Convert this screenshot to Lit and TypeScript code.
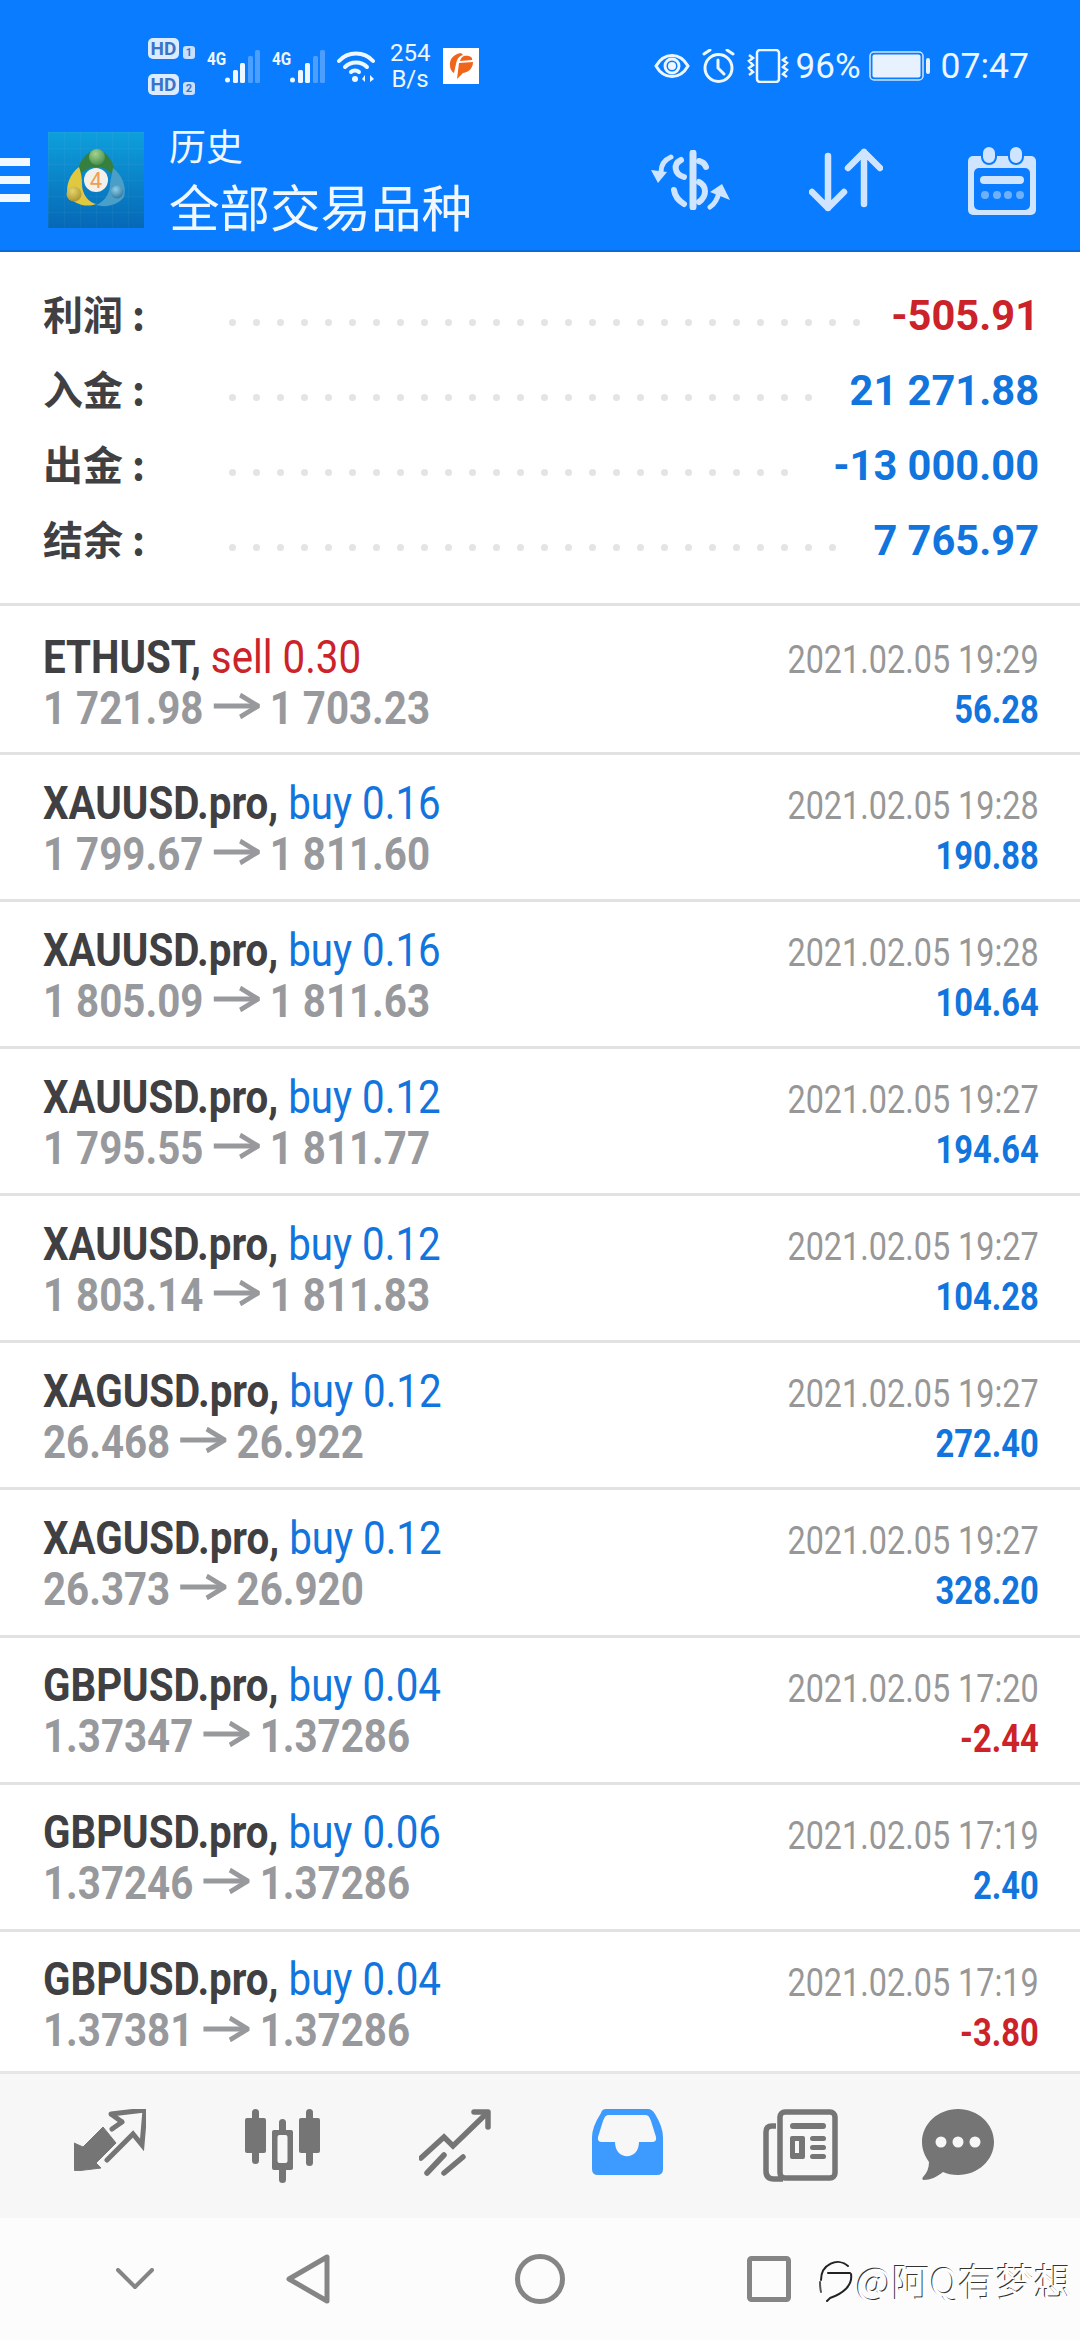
import { LitElement, html, css, svg } from "lit";
import { customElement } from "lit/decorators.js";

const LIGHT = "#cfe4ff";
const GREY = "#757575";

const summary = [
  { label: "利润", value: "-505.91", dots: 27, cls: "red" },
  { label: "入金", value: "21 271.88", dots: 25, cls: "blue" },
  { label: "出金", value: "-13 000.00", dots: 24, cls: "blue" },
  { label: "结余", value: "7 765.97", dots: 26, cls: "blue" },
];

const trades = [
  { sym: "ETHUST,", side: "sell 0.30", from: "1 721.98", to: "1 703.23", date: "2021.02.05 19:29", pnl: "56.28" },
  { sym: "XAUUSD.pro,", side: "buy 0.16", from: "1 799.67", to: "1 811.60", date: "2021.02.05 19:28", pnl: "190.88" },
  { sym: "XAUUSD.pro,", side: "buy 0.16", from: "1 805.09", to: "1 811.63", date: "2021.02.05 19:28", pnl: "104.64" },
  { sym: "XAUUSD.pro,", side: "buy 0.12", from: "1 795.55", to: "1 811.77", date: "2021.02.05 19:27", pnl: "194.64" },
  { sym: "XAUUSD.pro,", side: "buy 0.12", from: "1 803.14", to: "1 811.83", date: "2021.02.05 19:27", pnl: "104.28" },
  { sym: "XAGUSD.pro,", side: "buy 0.12", from: "26.468", to: "26.922", date: "2021.02.05 19:27", pnl: "272.40" },
  { sym: "XAGUSD.pro,", side: "buy 0.12", from: "26.373", to: "26.920", date: "2021.02.05 19:27", pnl: "328.20" },
  { sym: "GBPUSD.pro,", side: "buy 0.04", from: "1.37347", to: "1.37286", date: "2021.02.05 17:20", pnl: "-2.44" },
  { sym: "GBPUSD.pro,", side: "buy 0.06", from: "1.37246", to: "1.37286", date: "2021.02.05 17:19", pnl: "2.40" },
  { sym: "GBPUSD.pro,", side: "buy 0.04", from: "1.37381", to: "1.37286", date: "2021.02.05 17:19", pnl: "-3.80" },
];

const signal = svg`<svg width="35" height="33" viewBox="0 0 35 33">
  <circle cx="2.5" cy="30" r="2.5" fill="#eef6ff"/>
  <rect x="8" y="20" width="5" height="13" rx="1.5" fill="#eef6ff"/>
  <rect x="15" y="13" width="5" height="20" rx="1.5" fill="#eef6ff"/>
  <rect x="23" y="6" width="5" height="27" rx="1.5" fill="#4d9fff"/>
  <rect x="30" y="0" width="5" height="33" rx="1.5" fill="#4d9fff"/>
</svg>`;

const wifi = svg`<svg width="38" height="31" viewBox="0 0 38 31" fill="none" stroke="#eef6ff" stroke-width="4" stroke-linecap="round">
  <path d="M2 10C11 0 27 0 36 10"/>
  <path d="M8 16C14 10 24 10 30 16"/>
  <path d="M14 21C16 19 20 19 22 21"/>
  <circle cx="18" cy="28" r="3" fill="#eef6ff" stroke="none"/>
  <path d="M28 24l-3 4 3 3zM33 24l4 4-4 3z" fill="#eef6ff" stroke="none"/>
</svg>`;

const orange = svg`<svg width="36" height="36" viewBox="0 0 36 36">
  <rect width="36" height="36" fill="#fff"/>
  <path d="M18 5C11 6 6 11 7 18c0 3 2 6 4 7l2-9c1-5 3-8 7-9l-2-2z" fill="#f0651c"/>
  <path d="M21 8c6-1 9 2 8 4l-12 1c1-3 2-4 4-5zM16 15l14-1c0 6-4 10-10 11l-6 6z" fill="#f0651c"/>
</svg>`;

const eye = svg`<svg width="36" height="28" viewBox="0 0 36 28" fill="none" stroke="#eef6ff" stroke-width="3">
  <path d="M2 14C10 0 26 0 34 14C26 28 10 28 2 14Z"/>
  <circle cx="18" cy="14" r="7"/>
  <circle cx="18" cy="14" r="4" fill="#eef6ff" stroke="none"/>
</svg>`;

const alarm = svg`<svg width="33" height="34" viewBox="0 0 33 34" fill="none" stroke="#eef6ff" stroke-width="3" stroke-linecap="round">
  <circle cx="16.5" cy="19" r="13.5"/>
  <path d="M16 11v8l6 6M2 5l6-4M31 5l-6-4"/>
</svg>`;

const vibrate = svg`<svg width="42" height="34" viewBox="0 0 42 34" fill="none" stroke="#eef6ff" stroke-width="2.5">
  <rect x="10" y="1" width="22" height="32" rx="3"/>
  <path d="M2 6l4 3-4 3 4 4-4 3 4 4-4 3M40 8l-4 3 4 3-4 4 4 3-4 4 4 3"/>
</svg>`;

const battery = svg`<svg width="62" height="30" viewBox="0 0 62 30">
  <rect x="1" y="1" width="53" height="28" rx="4" fill="none" stroke="#cfe4ff" stroke-width="1.5"/>
  <rect x="3.5" y="3.5" width="48" height="23" rx="2" fill="#e8f2ff"/>
  <rect x="57" y="7" width="4" height="16" rx="2" fill="#e8f2ff"/>
</svg>`;

const logo = svg`<svg width="96" height="96" viewBox="0 0 96 96">
  <defs>
    <linearGradient id="lg" x1="0" y1="0" x2="0" y2="1"><stop offset="0" stop-color="#0e9fdc"/><stop offset="1" stop-color="#0668b6"/></linearGradient>
    <pattern id="grid" width="16" height="16" patternUnits="userSpaceOnUse"><path d="M16 0H0V16" fill="none" stroke="#fff" stroke-opacity=".07"/></pattern>
    <radialGradient id="hg" cx=".4" cy=".3" r=".8"><stop offset="0" stop-color="#a4d38e"/><stop offset="1" stop-color="#3d8a48"/></radialGradient>
    <radialGradient id="hy" cx=".4" cy=".3" r=".8"><stop offset="0" stop-color="#e6d46c"/><stop offset="1" stop-color="#a58d28"/></radialGradient>
    <radialGradient id="hb" cx=".4" cy=".3" r=".8"><stop offset="0" stop-color="#8fd0e6"/><stop offset="1" stop-color="#256f9c"/></radialGradient>
  </defs>
  <rect width="96" height="96" fill="url(#lg)"/>
  <rect width="96" height="96" fill="url(#grid)"/>
  <path d="M29 46C29 30 38 20 49 17C60 20 68 32 67 46C62 38 55 35 48 35C41 35 34 39 29 46Z" fill="#35803f"/>
  <path d="M31 35C22 42 17 54 20 64C26 72 38 76 48 72C40 70 34 62 34 52C34 46 33 40 31 35Z" fill="#e0c83f"/>
  <path d="M65 36C74 43 79 55 76 65C70 73 58 76 48 73C56 70 62 62 62 52C63 46 64 41 65 36Z" fill="#4a9fc8"/>
  <circle cx="49" cy="25" r="8" fill="url(#hg)"/>
  <circle cx="26" cy="62" r="7.5" fill="url(#hy)"/>
  <circle cx="69" cy="60" r="6.5" fill="url(#hb)"/>
  <circle cx="48" cy="48" r="12" fill="#f3f0ea"/>
  <text x="48" y="56" text-anchor="middle" font-family="Roboto, sans-serif" font-size="22" fill="#ef9f4f">4</text>
</svg>`;

const money = svg`<svg width="79" height="60" viewBox="0 0 79 60" fill="none" stroke="${LIGHT}" stroke-width="7" stroke-linecap="round">
  <path d="M42 3V57"/>
  <path d="M30 10C22 14 23 24 33 27" stroke-width="6"/>
  <path d="M48 11C52 12 54 14 55 17" stroke-width="6"/>
  <path d="M23 40C24 47 28 51 33 54" stroke-width="6"/>
  <path d="M48 32C56 36 56 46 48 52" stroke-width="6"/>
  <path d="M20 7C13 10 10 15 10 22" stroke-width="5"/>
  <path d="M0 20L16 22L7 33Z" fill="${LIGHT}" stroke="none"/>
  <path d="M59 57C65 53 67 47 68 42" stroke-width="5"/>
  <path d="M71 34L79 50L59 42Z" fill="${LIGHT}" stroke="none"/>
</svg>`;

const arrows = svg`<svg width="74" height="64" viewBox="0 0 74 64" fill="none" stroke="${LIGHT}" stroke-width="6.5" stroke-linecap="round" stroke-linejoin="round">
  <path d="M19 8V60M3 44L19 60L35 44"/>
  <path d="M55 56V4M39 20L55 4L71 20"/>
</svg>`;

const calendar = svg`<svg width="68" height="70" viewBox="0 0 68 70">
  <rect x="0" y="11" width="68" height="59" rx="5" fill="${LIGHT}"/>
  <rect x="6" y="23" width="56" height="42" rx="5" fill="#0a7cff"/>
  <rect x="14" y="1" width="14" height="18" rx="7" fill="${LIGHT}" stroke="#0a7cff" stroke-width="2"/>
  <rect x="41" y="1" width="14" height="18" rx="7" fill="${LIGHT}" stroke="#0a7cff" stroke-width="2"/>
  <rect x="12" y="31" width="44" height="8" rx="4" fill="${LIGHT}"/>
  <g fill="#6fb0fb"><circle cx="17" cy="50" r="4"/><circle cx="29" cy="50" r="4"/><circle cx="40" cy="50" r="4"/><circle cx="52" cy="50" r="4"/></g>
</svg>`;

const priceArrow = svg`<svg class="arrow" width="54" height="26" viewBox="0 0 54 26" fill="none" stroke="#98999c" stroke-width="5">
  <path d="M0 13H52"/>
  <path d="M31 2L52 13L31 24"/>
</svg>`;

const navIcons = [
  svg`<svg width="72" height="62" viewBox="0 0 72 62">
    <path d="M0 34V60Q0 62 2 62L27 59L22 54L42 34L29 18L9 38Z" fill="${GREY}" stroke="${GREY}" stroke-width="1" stroke-linejoin="round"/>
    <path d="M37 5L71 1L68 36L59 25L33 51M48 13L38 20" fill="none" stroke="${GREY}" stroke-width="5" stroke-linecap="round"/>
    <path d="M37 5L48 13" fill="none" stroke="${GREY}" stroke-width="5"/>
  </svg>`,
  svg`<svg width="75" height="74" viewBox="0 0 75 74" fill="${GREY}">
    <rect x="0" y="9" width="21" height="35" rx="2"/><rect x="7" y="0" width="7" height="55" rx="3.5"/>
    <rect x="54" y="9" width="21" height="35" rx="2"/><rect x="61" y="0" width="7" height="57" rx="3.5"/>
    <rect x="34" y="10" width="7" height="64" rx="3.5"/><rect x="27" y="21" width="21" height="40" rx="2"/>
    <rect x="32.5" y="26" width="10" height="28" rx="2" fill="#f7f7f7"/>
  </svg>`,
  svg`<svg width="72" height="67" viewBox="0 0 72 67" fill="none" stroke="${GREY}" stroke-width="5.5" stroke-linecap="round">
    <path d="M2 49L25 28L34 37L67 5"/>
    <path d="M55 3H69V18" stroke-linejoin="round"/>
    <path d="M8 64L25 46M25 64L44 48"/>
  </svg>`,
  svg`<svg width="71" height="66" viewBox="0 0 71 66">
    <path d="M9 4Q10 0 14 0H56Q60 0 63 5Q71 18 71 28V60Q71 66 65 66H6Q0 66 0 60V28Q0 18 9 4Z" fill="#3d9bff"/>
    <path d="M16 6H54Q57 6 59 12L64 28Q65 33 60 33H47C47 52 23 52 23 33H10Q5 33 6 28L11 12Q13 6 16 6Z" fill="#f7f7f7"/>
  </svg>`,
  svg`<svg width="75" height="73" viewBox="0 0 75 73">
    <rect x="17" y="3" width="55" height="66" rx="5" fill="none" stroke="${GREY}" stroke-width="5.5"/>
    <path d="M13 17H9Q3 17 3 23V62Q3 70 11 70H20" fill="none" stroke="${GREY}" stroke-width="5.5"/>
    <rect x="27" y="14" width="36" height="6" rx="3" fill="${GREY}"/>
    <path fill-rule="evenodd" d="M29 27H40Q42 27 42 29V48Q42 50 40 50H29Q27 50 27 48V29Q27 27 29 27ZM32 32V44H36V32Z" fill="${GREY}"/>
    <rect x="47" y="27" width="16" height="5" rx="2.5" fill="${GREY}"/>
    <rect x="47" y="36" width="16" height="5" rx="2.5" fill="${GREY}"/>
    <rect x="47" y="45" width="16" height="5" rx="2.5" fill="${GREY}"/>
  </svg>`,
  svg`<svg width="73" height="72" viewBox="0 0 73 72">
    <path d="M36 0C56 0 72 15 72 33S56 66 36 66C30 66 25 65 21 63C15 68 8 71 2 71C0 71 0 69 1 68C5 64 7 59 7 53C3 47 0 41 0 33C0 15 16 0 36 0Z" fill="${GREY}"/>
    <g fill="#f7f7f7"><circle cx="19" cy="33" r="5.5"/><circle cx="36" cy="33" r="5.5"/><circle cx="53" cy="33" r="5.5"/></g>
  </svg>`,
];

const chevron = svg`<svg width="38" height="22" viewBox="0 0 38 22" fill="none" stroke="#858585" stroke-width="4" stroke-linecap="round" stroke-linejoin="round"><path d="M2 2L19 19L36 2"/></svg>`;
const back = svg`<svg width="44" height="50" viewBox="0 0 44 50" fill="none" stroke="#858585" stroke-width="5" stroke-linejoin="round"><path d="M41 3V47L3 25Z"/></svg>`;
const home = svg`<svg width="50" height="50" viewBox="0 0 50 50" fill="none" stroke="#858585" stroke-width="5"><circle cx="25" cy="25" r="22.5"/></svg>`;
const recents = svg`<svg width="44" height="46" viewBox="0 0 44 46" fill="none" stroke="#858585" stroke-width="5" stroke-linejoin="round"><rect x="2.5" y="2.5" width="39" height="41" rx="2"/></svg>`;
const weibo = svg`<svg width="36" height="46" viewBox="0 0 36 46" fill="none" stroke="#222" stroke-width="2" stroke-linecap="round">
  <path d="M3 24C3 8 20 1 30 10"/>
  <path d="M2 26C2 30 2 32 3 36" stroke="#555"/>
  <path d="M10 17H32"/>
  <path d="M33 18C35 30 24 38 12 42L9 45"/>
</svg>`;

@customElement("app-root")
export class AppRoot extends LitElement {
  static styles = css`
    :host {
      display: block;
      width: 1080px;
      height: 2340px;
      overflow: hidden;
      background: #fff;
      font-family: Roboto, "Noto Sans CJK SC", sans-serif;
    }
    .page {
      display: flex;
      flex-direction: column;
      height: 2340px;
    }
    svg {
      display: block;
      flex: none;
    }
    .header {
      flex: none;
      background: #0a7cff;
      border-bottom: 2px solid #0a6ad6;
      color: #fff;
    }
    .status {
      display: flex;
      align-items: center;
      height: 120px;
      padding: 12px 51px 0 148px;
      box-sizing: border-box;
      color: #eef6ff;
    }
    .hd-stack {
      display: flex;
      flex-direction: column;
      gap: 15px;
      width: 47px;
      margin-right: 12px;
    }
    .hd-row {
      display: flex;
      align-items: flex-end;
      justify-content: space-between;
    }
    .hd {
      width: 31px;
      height: 21px;
      line-height: 21px;
      border-radius: 5px;
      background: #dcebff;
      color: #3a74c8;
      font-size: 19px;
      font-weight: 700;
      text-align: center;
    }
    .sim {
      width: 12px;
      height: 13px;
      line-height: 13px;
      border-radius: 3px;
      background: #c8e0ff;
      color: #3a74c8;
      font-size: 11px;
      font-weight: 700;
      text-align: center;
    }
    .net {
      display: flex;
      align-items: flex-end;
      width: 53px;
      margin-right: 12px;
      height: 33px;
    }
    .net span {
      align-self: flex-start;
      width: 18px;
      margin-top: 1px;
      font-size: 18px;
      font-weight: 700;
      line-height: 16px;
      white-space: nowrap;
      transform: scaleX(0.85);
      transform-origin: left;
    }
    .wifi {
      margin-right: 15px;
    }
    .speed {
      width: 40px;
      margin-right: 13px;
      font-size: 24px;
      line-height: 26px;
      text-align: center;
    }
    .status-right {
      display: flex;
      align-items: center;
      margin-left: auto;
    }
    .status-right .eye {
      margin-right: 12px;
    }
    .status-right .alarm {
      margin-right: 12px;
    }
    .status-right .vib {
      margin-right: 7px;
    }
    .pct {
      width: 64px;
      margin-right: 9px;
      font-size: 35px;
      white-space: nowrap;
    }
    .status-right .bat {
      margin-right: 10px;
    }
    .time {
      font-size: 35.5px;
    }
    .toolbar {
      display: flex;
      align-items: center;
      height: 130px;
      padding: 0 44px 10px 0;
      box-sizing: border-box;
    }
    .menu {
      display: flex;
      flex-direction: column;
      gap: 10px;
      width: 30px;
      margin-right: 18px;
    }
    .menu i {
      display: block;
      height: 8px;
      background: #f2f8ff;
    }
    .title {
      margin: 0 0 6px 25px;
      color: #f0f7ff;
      font-family: "Noto Sans CJK SC", sans-serif;
    }
    .title .sub {
      font-size: 37px;
      line-height: 50px;
    }
    .title .main {
      margin-top: 5px;
      font-size: 50.5px;
      line-height: 60px;
    }
    .tools {
      display: flex;
      align-items: center;
      margin-left: auto;
    }
    .tools .t1 {
      margin-right: 79px;
    }
    .tools .t2 {
      margin-right: 85px;
    }
    .summary {
      flex: none;
      height: 354px;
      padding-top: 26px;
      box-sizing: border-box;
      border-bottom: 3px solid #e2e2e2;
    }
    .sum-row {
      display: flex;
      align-items: center;
      height: 75px;
      padding: 0 41px 0 43px;
    }
    .sum-label {
      flex: none;
      width: 186px;
      margin-bottom: 5px;
      color: #404042;
      font-family: "Noto Sans CJK SC", sans-serif;
      font-size: 40px;
      font-weight: 700;
    }
    .colon {
      margin-left: 9px;
    }
    .dots {
      display: flex;
      gap: 17px;
      margin-top: 14px;
    }
    .dots i {
      display: block;
      width: 7px;
      height: 7px;
      border-radius: 50%;
      background: #e4e4e4;
    }
    .sum-value {
      margin-left: auto;
      font-size: 41.6px;
      font-weight: 700;
      white-space: nowrap;
    }
    .list {
      flex: none;
      height: 1465px;
      overflow: hidden;
    }
    .trade {
      display: flex;
      justify-content: space-between;
      height: 147.1px;
      padding: 0 41px 0 43px;
      box-sizing: border-box;
      border-bottom: 3px solid #e2e2e2;
      white-space: nowrap;
    }
    .trade:first-child {
      height: 149px;
      padding-top: 3px;
    }
    .left {
      padding-top: 21.5px;
    }
    .right {
      padding-top: 26px;
      text-align: right;
    }
    .line1,
    .line2 {
      transform: scaleX(0.857);
      transform-origin: left;
    }
    .line1 {
      font-size: 47px;
      line-height: 51px;
      color: #404042;
    }
    .sym {
      font-weight: 700;
    }
    .line2 {
      font-size: 47px;
      line-height: 51px;
      color: #98999c;
      font-weight: 700;
    }
    .arrow {
      display: inline-block;
      vertical-align: 4.7px;
    }
    .right .date {
      font-size: 39px;
      line-height: 50px;
      color: #979797;
      transform: scaleX(0.83);
      transform-origin: right;
    }
    .right .pnl {
      font-size: 38px;
      line-height: 51px;
      font-weight: 700;
      transform: scaleX(0.86);
      transform-origin: right;
    }
    .red,
    .line2.red {
      color: #cc2229;
    }
    .blue,
    .line2.blue {
      color: #1274dd;
    }
    .tabs {
      flex: none;
      display: grid;
      grid-template-columns: repeat(5, 172.5px) 143px;
      align-items: start;
      height: 147px;
      padding: 35px 0 0 24px;
      box-sizing: border-box;
      background: #f7f7f7;
      border-top: 3px solid #e6e6e6;
    }
    .tabs div {
      display: flex;
      justify-content: center;
    }
    .sysnav {
      flex: 1;
      display: grid;
      grid-template-columns: 270px 76px 388px 70px 1fr;
      align-items: center;
      background: #fcfcfc;
    }
    .sysnav > div {
      display: flex;
      justify-content: center;
    }
    .sysnav > .mark {
      align-items: center;
      justify-content: flex-start;
      padding-left: 14px;
      gap: 2px;
    }
    .mark span {
      color: #fff;
      font-family: "Noto Sans CJK SC", sans-serif;
      font-size: 38px;
      white-space: nowrap;
      text-shadow: -1px -1px 0 #333;
    }
  `;

  render() {
    return html`
      <div class="page">
        <div class="header">
          <div class="status">
            <div class="hd-stack">
              <div class="hd-row"><div class="hd">HD</div><div class="sim">1</div></div>
              <div class="hd-row"><div class="hd">HD</div><div class="sim">2</div></div>
            </div>
            <div class="net"><span>4G</span>${signal}</div>
            <div class="net"><span>4G</span>${signal}</div>
            <div class="wifi">${wifi}</div>
            <div class="speed">254<br />B/s</div>
            <div>${orange}</div>
            <div class="status-right">
              <div class="eye">${eye}</div>
              <div class="alarm">${alarm}</div>
              <div class="vib">${vibrate}</div>
              <div class="pct">96%</div>
              <div class="bat">${battery}</div>
              <div class="time">07:47</div>
            </div>
          </div>
          <div class="toolbar">
            <div class="menu"><i></i><i></i><i></i></div>
            ${logo}
            <div class="title">
              <div class="sub">历史</div>
              <div class="main">全部交易品种</div>
            </div>
            <div class="tools">
              <div class="t1">${money}</div>
              <div class="t2">${arrows}</div>
              <div>${calendar}</div>
            </div>
          </div>
        </div>

        <div class="summary">
          ${summary.map(
            (s) => html`
              <div class="sum-row">
                <div class="sum-label">${s.label}<span class="colon">:</span></div>
                <div class="dots">${Array.from({ length: s.dots }, () => html`<i></i>`)}</div>
                <div class="sum-value ${s.cls}">${s.value}</div>
              </div>
            `
          )}
        </div>

        <div class="list">
          ${trades.map(
            (t) => html`
              <div class="trade">
                <div class="left">
                  <div class="line1">
                    <span class="sym">${t.sym}</span>
                    <span class=${t.side.startsWith("sell") ? "red" : "blue"}>${t.side}</span>
                  </div>
                  <div class="line2">${t.from} ${priceArrow} ${t.to}</div>
                </div>
                <div class="right">
                  <div class="date">${t.date}</div>
                  <div class="pnl ${t.pnl.startsWith("-") ? "red" : "blue"}">${t.pnl}</div>
                </div>
              </div>
            `
          )}
        </div>

        <div class="tabs">${navIcons.map((i) => html`<div>${i}</div>`)}</div>

        <div class="sysnav">
          <div>${chevron}</div>
          <div>${back}</div>
          <div>${home}</div>
          <div>${recents}</div>
          <div class="mark">${weibo}<span>@阿Q有梦想</span></div>
        </div>
      </div>
    `;
  }
}
